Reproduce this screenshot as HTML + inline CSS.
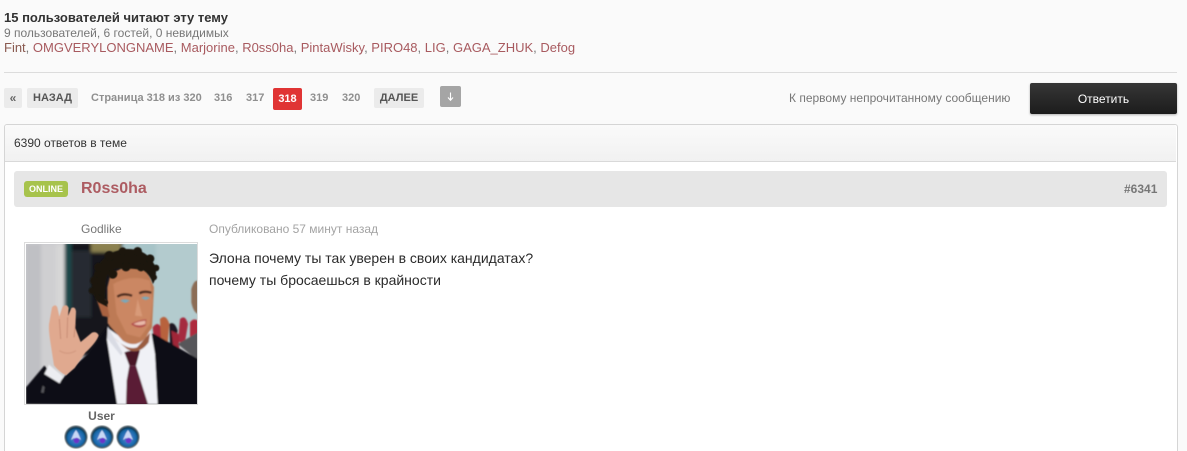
<!DOCTYPE html>
<html lang="ru"><head><meta charset="utf-8"><style>
html,body{margin:0;padding:0;height:451px;overflow:hidden}
body{width:1187px;background:#fafafa;position:relative;font-family:"Liberation Sans",Arial,sans-serif;font-size:12px;color:#323232}
.a{position:absolute;white-space:nowrap}
.r{color:#a85a5f}
.b{background:#ebebeb;border-radius:2px;font-weight:bold;font-size:11px;color:#555;text-align:center;height:20px;line-height:20px;top:88px}
.p{font-weight:bold;font-size:11px;color:#8f8f8f;top:88px;line-height:20px}
</style></head><body>
<div class="a" style="left:4px;top:10px;font-size:13px;font-weight:bold;line-height:16px;color:#323232">15 пользователей читают эту тему</div>
<div class="a" style="left:4px;top:26px;font-size:12px;line-height:14px;color:#777">9 пользователей, 6 гостей, 0 невидимых</div>
<div class="a" style="left:4px;top:40px;font-size:13px;line-height:16px;color:#777"><span class="r" style="color:#8a5a50">Fint</span>, <span class="r">OMGVERYLONGNAME</span>, <span class="r">Marjorine</span>, <span class="r">R0ss0ha</span>, <span class="r">PintaWisky</span>, <span class="r">PIRO48</span>, <span class="r">LIG</span>, <span class="r">GAGA_ZHUK</span>, <span class="r">Defog</span></div>
<div class="a" style="left:4px;top:72px;width:1173px;height:1px;background:#dcdcdc"></div>

<div class="a b" style="left:4px;width:18px;color:#666;font-size:12px">«</div>
<div class="a b" style="left:27px;width:51px">НАЗАД</div>
<div class="a p" style="left:91px">Страница 318 из 320</div>
<div class="a p" style="left:214px">316</div>
<div class="a p" style="left:246px">317</div>
<div class="a" style="left:273px;top:88px;width:29px;height:22px;line-height:22px;background:#e03434;border-radius:2px;color:#fff;font-weight:bold;font-size:11px;text-align:center">318</div>
<div class="a p" style="left:310px">319</div>
<div class="a p" style="left:342px">320</div>
<div class="a b" style="left:374px;width:50px">ДАЛЕЕ</div>
<div class="a" style="left:440px;top:86px;width:21px;height:21px;background:#a5a5a5;border-radius:2px">
<svg width="21" height="21" viewBox="0 0 21 21" style="display:block"><path d="M10.5 6.5V14M8 11.5l2.5 2.8 2.5-2.8" fill="none" stroke="#fff" stroke-width="1.1"/></svg></div>

<div class="a" style="left:789px;top:90px;font-size:12px;line-height:16px;color:#777">К первому непрочитанному сообщению</div>
<div class="a" style="left:1030px;top:83px;width:147px;height:31px;line-height:32px;border-radius:2px;background:linear-gradient(#363636,#1c1c1c);box-shadow:0 1px 2px rgba(0,0,0,.3);color:#fff;font-size:12px;text-align:center">Ответить</div>

<div class="a" style="left:4px;top:124px;width:1172px;height:335px;background:#fff;border:1px solid #d5d5d5;border-radius:3px 3px 0 0"></div>
<div class="a" style="left:5px;top:125px;width:1171px;height:36px;background:linear-gradient(#fafafa,#f1f1f1);border-bottom:1px solid #d9d9d9;border-radius:3px 3px 0 0"></div>
<div class="a" style="left:14px;top:135px;font-size:12px;line-height:16px;color:#333">6390 ответов в теме</div>

<div class="a" style="left:14px;top:171px;width:1153px;height:36px;background:#e6e6e6;border-radius:3px"></div>
<div class="a" style="left:24px;top:181px;width:44px;height:16px;line-height:16px;background:#a7c34c;border-radius:3px;color:#fff;font-weight:bold;font-size:9px;text-align:center">ONLINE</div>
<div class="a" style="left:81px;top:179px;font-size:16px;font-weight:bold;line-height:20px;color:#ad5c62">R0ss0ha</div>
<div class="a" style="left:1124px;top:181px;font-size:12px;font-weight:bold;line-height:16px;color:#777">#6341</div>

<div class="a" style="left:81px;top:221px;font-size:12px;line-height:16px;color:#777">Godlike</div>
<div class="a" style="left:209px;top:221px;font-size:12px;line-height:16px;color:#a3a3a3">Опубликовано 57 минут назад</div>
<div class="a" style="left:209px;top:247px;font-size:14px;line-height:22px;color:#2a2a2a">Элона почему ты так уверен в своих кандидатах?<br>почему ты бросаешься в крайности</div>

<div class="a" style="left:25px;top:243px;width:172px;height:161px;background:#fff;box-shadow:0 0 0 1px #dcdcdc">
<svg width="171" height="160" viewBox="0 0 513 480" preserveAspectRatio="none" style="display:block;margin:1px 0 0 1px">
<defs><filter id="s"><feGaussianBlur stdDeviation="2.2"/></filter><filter id="h"><feGaussianBlur stdDeviation="1.8"/></filter><filter id="w"><feGaussianBlur stdDeviation="5"/></filter></defs>
<rect width="513" height="480" fill="#c9c9cd"/>
<g filter="url(#w)">
<rect x="0" y="0" width="45" height="440" fill="#bfc0c4"/>
<rect x="45" y="0" width="45" height="440" fill="#cfcfd1"/>
<rect x="90" y="0" width="26" height="420" fill="#d6d6d6"/>
<rect x="116" y="-5" width="180" height="340" fill="#14191c"/>
<rect x="116" y="-5" width="20" height="200" fill="#1c4a4c"/>
<rect x="136" y="20" width="60" height="200" fill="#262c30"/>
<rect x="195" y="-5" width="90" height="30" fill="#8b8150"/>
<rect x="290" y="-5" width="230" height="310" fill="#b3cbce"/>
<rect x="290" y="-5" width="100" height="100" fill="#a7c4c8"/>
</g>
<g filter="url(#s)">
<path d="M380 250q15-20 25 0l15 55-35-10z" fill="#a42a3c"/>
<path d="M402 225q18-18 28 15l-5 60-20-8z" fill="#b8623e"/>
<path d="M430 240q15-10 25 20l-8 45-15-5z" fill="#1e1820"/>
<path d="M462 225q16-15 24 15l-10 60-20-8z" fill="#a52a40"/>
<path d="M492 235q10-15 24-5v60l-24 10z" fill="#ae2c3c"/>
<path d="M436 260l22 10 2 45-18-5z" fill="#a02838"/>
<path d="M496 135q8-28 20-25v100q-14-5-20-35z" fill="#8c6d57"/>
<path d="M455 300l61-35v85z" fill="#56565a"/>
<path d="M0 480V430l55-65 45 50 40-45 45-40 60-85 140 25 131 75v140z" fill="#0e0e14"/>
<path d="M245 252l-2 36 30 192h122l-8-150-12-70-60 40z" fill="#f0f1f6"/>
<path d="M245 285l40 50 5-8-45-80z" fill="#d9dbe4"/>
<path d="M295 325q20-8 47-5l-12 45h-20z" fill="#4a1428"/>
<path d="M310 365h20l36 115h-66l2-70z" fill="#5a1c34"/>
<path d="M55 390l14-28 42 36-10 20z" fill="#ecedf1"/>
<path d="M50 425l6 4-3 18-8-2z" fill="#54545a"/>
<path d="M245 238l45 52q40 25 70-10l18-30 6-120-20-50-60-15-50 25-10 40z" fill="#bd7a55"/>
<path d="M213 170q14-12 28 0l10 50-22-4z" fill="#a9623f"/>
<path d="M262 120q50-30 110-10l8 60-8 70-30 40-40-10-30-60z" fill="#cb8763"/>
<path d="M263 280q40 40 70 30l40-45-5 30q-30 40-65 20z" fill="#9a5c40"/>
<path d="M335 165l-8 50 22 2z" fill="#d89a78"/>
</g>
<g filter="url(#h)">
<path d="M74 300q-8-50-4-65l8-45q10-12 16 0l6 28 10-30q12-10 18 4l-2 24 10-24q12-6 14 10l-2 50 16 42 34-28q14-6 20 8-6 20-40 52l-32 46-26 22q-20-10-36-30z" fill="#e0a98f"/>
<path d="M100 225l4 60M125 220l-2 62M148 240l-4 40" stroke="#b97c66" stroke-width="3" fill="none" opacity=".6"/>
<path d="M100 320q25 15 50 0" stroke="#c98f78" stroke-width="4" fill="none" opacity=".5"/>
</g>
<g filter="url(#h)" fill="#1a1410">
<path d="M200 150q-8-45 12-80 30-50 90-55 60-2 85 50 8 30-6 55-10-30-30-42-50-8-90-2-20 10-22 45l-2 48 8 20-30-15z"/>
<circle cx="205" cy="110" r="13"/><circle cx="198" cy="140" r="10"/><circle cx="218" cy="70" r="14"/><circle cx="250" cy="36" r="15"/><circle cx="290" cy="22" r="12"/><circle cx="335" cy="22" r="13"/><circle cx="372" cy="44" r="13"/><circle cx="390" cy="72" r="10"/><circle cx="384" cy="100" r="9"/><circle cx="215" cy="160" r="9"/><circle cx="238" cy="175" r="8"/><circle cx="260" cy="90" r="14"/><circle cx="300" cy="68" r="14"/><circle cx="345" cy="70" r="12"/>
</g>
<g filter="url(#s)">
<path d="M282 170q14-8 30 0l-14 7z" fill="#78a8bc"/>
<path d="M345 162q12-8 28 0l-14 6z" fill="#78a8bc"/>
<path d="M274 158q18-12 44-3M340 148q14-8 36-2" stroke="#44261a" stroke-width="6" fill="none"/>
<path d="M315 240q22-12 46-14l-2 18q-20 14-44-4z" fill="#b04848"/>
<path d="M322 240q16-8 36-10v10q-18 8-36 0z" fill="#e8b8a8"/>
</g>
</svg></div>

<div class="a" style="left:24px;top:409px;width:155px;text-align:center;font-size:12px;font-weight:bold;line-height:15px;color:#666">User</div>
<svg class="a" style="left:64px;top:425px" width="76" height="24" viewBox="0 0 76 24">
<defs><radialGradient id="m" cx=".5" cy=".55" r=".5"><stop offset="0" stop-color="#7c68d8"/><stop offset=".4" stop-color="#3a78c2"/><stop offset=".8" stop-color="#1668a8"/><stop offset="1" stop-color="#0d3a55"/></radialGradient>
<filter id="b"><feGaussianBlur stdDeviation=".4"/></filter>
<g id="o" filter="url(#b)"><circle cx="12" cy="12" r="11.5" fill="#5c6a70"/><circle cx="12" cy="12" r="10.3" fill="url(#m)"/><path d="M7 15l3-7 2-3 2 3 3 7-3-2-2 2-2-2z" fill="#c8d8f5"/><circle cx="12.5" cy="15.5" r="2.8" fill="#6a35c8"/></g></defs>
<use href="#o" x="0"/><use href="#o" x="26"/><use href="#o" x="52"/>
</svg>
</body></html>
